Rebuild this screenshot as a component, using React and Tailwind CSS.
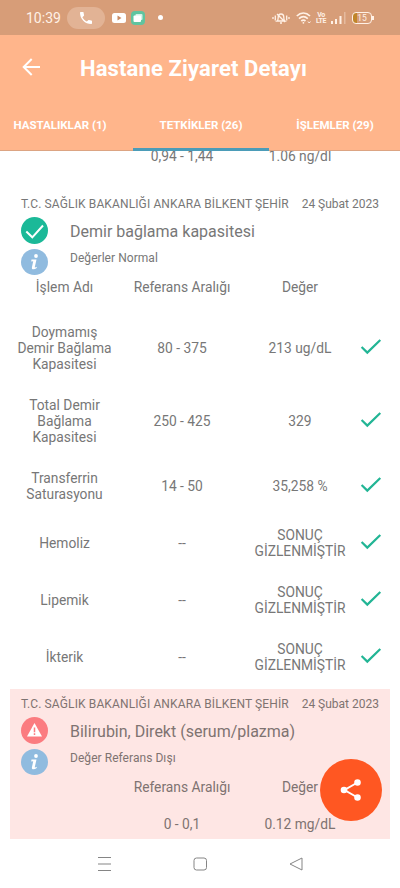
const analyses = [
  { name: "Doymamış\nDemir Bağlama\nKapasitesi", range: "80 - 375", value: "213 ug/dL", height: "h-[73px]" },
  { name: "Total Demir\nBağlama\nKapasitesi", range: "250 - 425", value: "329", height: "h-[73px]" },
  { name: "Transferrin\nSaturasyonu", range: "14 - 50", value: "35,258 %", height: "h-[57px]" },
  { name: "Hemoliz", range: "--", value: "SONUÇ\nGİZLENMİŞTİR", height: "h-[57px]" },
  { name: "Lipemik", range: "--", value: "SONUÇ\nGİZLENMİŞTİR", height: "h-[57px]" },
  { name: "İkterik", range: "--", value: "SONUÇ\nGİZLENMİŞTİR", height: "h-[57px]" },
];

function Tick() {
  return (
    <svg className="-mt-px h-5 w-6" viewBox="0 0 24 20" fill="none" stroke="#22b595" strokeWidth="2.200">
      <path d="M2.600 10 L8.300 15.600 L21.300 3" />
    </svg>
  );
}

function StatusBar() {
  return (
    <div className="flex h-[35px] items-center bg-[#d79d78] pl-[26px] text-[#fff1e6]">
      <span className="w-[41px] text-[14px] leading-4">10:39</span>
      <div className="flex h-[22px] w-[38px] items-center justify-center rounded-full bg-[#e2b395]">
        <svg className="h-4 w-4" viewBox="0 0 24 24" fill="#fff">
          <path d="M6.6 10.8c1.4 2.8 3.8 5.1 6.6 6.6l2.2-2.2c.3-.3.7-.4 1-.2 1.1.4 2.3.6 3.6.6.6 0 1 .4 1 1V20c0 .6-.4 1-1 1C10.600 21 3 13.400 3 4c0-.6.5-1 1-1h3.500c.6 0 1 .4 1 1 0 1.300.2 2.500.6 3.600.1.300 0 .700-.2 1z" />
        </svg>
      </div>
      <svg className="ml-[7px] h-[10px] w-[14px]" viewBox="0 0 14 10">
        <rect width="14" height="10" rx="2.500" fill="#fff" />
        <path d="M5.500 2.500v5l4-2.500z" fill="#c98b65" />
      </svg>
      <svg className="ml-[5px] h-[14px] w-[14px]" viewBox="0 0 14 14">
        <rect width="14" height="14" rx="4" fill="#5fc49f" />
        <rect x="4.500" y="3" width="7" height="6" rx="1" fill="#d5f3e7" />
        <rect x="2.500" y="4.500" width="7.500" height="6.500" rx="1" fill="#fff" />
      </svg>
      <span className="ml-[13px] h-[5px] w-[5px] rounded-full bg-white" />
      <svg className="ml-[109px] h-4 w-[18px]" viewBox="0 0 18 16" fill="none" stroke="currentColor" strokeWidth="1.300">
        <path d="M1 7v2M3.300 5.500v5M17 7v2M14.700 5.500v5M5 11h8c-1.300-1-1.200-2-1.200-3.500 0-2-1-3.500-2.800-3.500S6.200 5.500 6.200 7.500C6.200 9 6.300 10 5 11zM8 13h2M5 4l8 8" />
      </svg>
      <svg className="ml-[6px] h-4 w-4" viewBox="0 0 16 16" fill="none" stroke="currentColor" strokeWidth="1.700">
        <path d="M.8 6c4-3.900 9.200-3.900 13.200 0M3 8.700c2.700-2.500 6.100-2.500 8.800 0M5.300 11c1.300-1.100 2.900-1.100 4.200 0" />
        <circle cx="7.400" cy="12.800" r=".9" fill="currentColor" stroke="none" />
        <path d="M12 11.500l1.200 1.500 1.300-1.500" strokeWidth="1" />
      </svg>
      <span className="ml-[4px] w-[10px] text-center text-[7px] font-bold leading-[6px] tracking-[-0.5px]">
        Vo LTE
      </span>
      <svg className="ml-[5px] mt-px h-3 w-[16px]" viewBox="0 0 16 12" fill="currentColor">
        <rect x="0" y="9" width="2" height="3" />
        <rect x="4" y="7" width="2" height="5" />
        <rect x="8.500" y="4" width="2" height="8" />
        <rect x="13" y="0" width="1.500" height="12" opacity=".35" />
      </svg>
      <div className="ml-[5px] flex items-center">
        <div className="flex h-3 w-5 items-center justify-center rounded-[4px] border border-[#fff1e6] bg-linear-to-r from-[#c08529] from-20% to-transparent to-20% text-[8.500px] leading-none">
          <span className="pt-px">15</span>
        </div>
        <span className="h-1 w-[1.500px] bg-[#fff1e6]" />
      </div>
    </div>
  );
}

function Header() {
  return (
    <header className="bg-[#ffb58b] text-white">
      <div className="flex h-[65px] items-center pl-[22px]">
        <svg className="-mt-[2px] h-[18px] w-[18px]" viewBox="0 0 18 18" fill="none" stroke="#fff" strokeWidth="2">
          <path d="M18 9H2M9.700 1L1.700 9l8 8" />
        </svg>
        <h1 className="ml-10 whitespace-nowrap pt-0.5 text-[22px] font-bold leading-7 tracking-[0.13px]">Hastane Ziyaret Detayı</h1>
      </div>
      <nav className="grid h-[51px] grid-cols-[133px_136px_131px] whitespace-nowrap text-center text-[11.500px] font-bold leading-4">
        <span className="border-b border-[#dca483] pr-[13px] pt-[17px]">HASTALIKLAR (1)</span>
        <span className="border-b-3 border-[#4b9cb8] pt-[17px]">TETKİKLER (26)</span>
        <span className="border-b border-[#dca483] pl-[1px] pt-[17px]">İŞLEMLER (29)</span>
      </nav>
    </header>
  );
}

function Info() {
  return (
    <svg className="mt-[3px] h-[26px] w-[27px] shrink-0" viewBox="0 0 27 26">
      <ellipse cx="13.500" cy="13" rx="13.500" ry="13" fill="#90bbdf" />
      <g fill="#fff">
        <circle cx="15" cy="7" r="1.900" />
        <path d="M10.500 10.500h5l-1.700 7.500c-.1.800.5.700 1.900-.2v1.300c-2.300 1.700-5.300 1.800-4.800-.6l1.300-6.200-2 .1z" />
      </g>
    </svg>
  );
}

function ReportHead({ title, note, icon }) {
  return (
    <>
      <div className="flex h-[25px] items-center justify-between whitespace-nowrap px-[11px] pt-[5px] text-[12px] leading-4">
        <span className="tracking-[0.125px]">T.C. SAĞLIK BAKANLIĞI ANKARA BİLKENT ŞEHİR</span>
        <span>24 Şubat 2023</span>
      </div>
      <div className="flex h-8 items-center pl-[11px]">
        {icon}
        <span className="ml-[22px] pt-[3px] text-[16px] leading-5">{title}</span>
      </div>
      <div className="flex h-[28px] pl-[11px]">
        <Info />
        <span className="ml-[22px] pt-[4px] text-[12px] leading-4 tracking-[0.05px]">{note}</span>
      </div>
    </>
  );
}

function Row({ name, range, value, children, height }) {
  return (
    <div className={`-ml-1 grid grid-cols-[117px_118px_118px_24px] items-center whitespace-pre-line text-center text-[13.800px] leading-4 ${height}`}>
      <span>{name}</span>
      <span>{range}</span>
      <span>{value}</span>
      {children}
    </div>
  );
}

export default function App() {
  return (
    <div className="flex h-[888px] w-[400px] flex-col overflow-hidden bg-white font-[Roboto,sans-serif] text-[#777777]">
      <StatusBar />
      <Header />
      <main className="flex flex-1 flex-col px-[10px]">
        <div className="h-[38px] overflow-hidden">
          <div className="-mt-[3px]">
            <Row name="" range="0,94 - 1,44" value="1.06 ng/dl" height="h-4" />
          </div>
        </div>
        <section className="h-[500px]">
          <ReportHead
            title="Demir bağlama kapasitesi"
            note="Değerler Normal"
            icon={
              <svg className="h-[27px] w-[27px]" viewBox="0 0 27 27" fill="none">
                <circle cx="13.500" cy="13.500" r="13.500" fill="#1bb998" />
                <path d="M5.300 14.500l6 5.800L22 8.500" stroke="#fff" strokeWidth="2" />
              </svg>
            }
          />
          <Row name="İşlem Adı" range="Referans Aralığı" value="Değer" height="h-[26px]" />
          <div className="mt-[11px]">
            {analyses.map((item) => (
              <Row key={item.name} {...item}><Tick /></Row>
            ))}
          </div>
        </section>
        <section className="relative h-[150px] bg-[#fee6e4] text-[#7e7371]">
          <ReportHead
            title="Bilirubin, Direkt (serum/plazma)"
            note="Değer Referans Dışı"
            icon={
              <svg className="h-[27px] w-[27px]" viewBox="0 0 27 27">
                <circle cx="13.500" cy="13.500" r="13.500" fill="#fb7c80" />
                <path d="M13.500 6L21 19.500H6z" fill="#fff" />
                <path d="M13.500 10.500v4.700M13.500 16.300v1.700" stroke="#fb7c80" strokeWidth="1.500" />
              </svg>
            }
          />
          <Row name="" range="Referans Aralığı" value="Değer" height="h-[26px]" />
          <Row name="" range="0 - 0,1" value="0.12 mg/dL" height="h-[48px]" />
          <button className="absolute left-[310px] top-[70px] flex h-[62px] w-[62px] items-center justify-center rounded-full bg-[#ff5722]" aria-label="Paylaş">
            <svg className="h-6 w-6" viewBox="0 0 24 24" fill="#fff" stroke="#fff" strokeWidth="2">
              <path d="M18.500 4.500L5.500 12l13 7.500" fill="none" />
              <circle cx="18.500" cy="4.500" r="2.300" />
              <circle cx="5" cy="12" r="2.300" />
              <circle cx="18.500" cy="19.500" r="2.300" />
            </svg>
          </button>
        </section>
      </main>
      <footer className="flex h-[49px] items-center justify-center pr-[1px]">
        <svg className="h-4 w-[210px]" viewBox="0 0 210 16" fill="none" stroke="#858585" strokeWidth="1">
          <path d="M3 1.500h13M3 8h13M3 14.500h13" />
          <rect x="99" y="2" width="12.500" height="12" rx="2.500" />
          <path d="M207 2v12l-12-6z" strokeLinejoin="round" />
        </svg>
      </footer>
    </div>
  );
}
